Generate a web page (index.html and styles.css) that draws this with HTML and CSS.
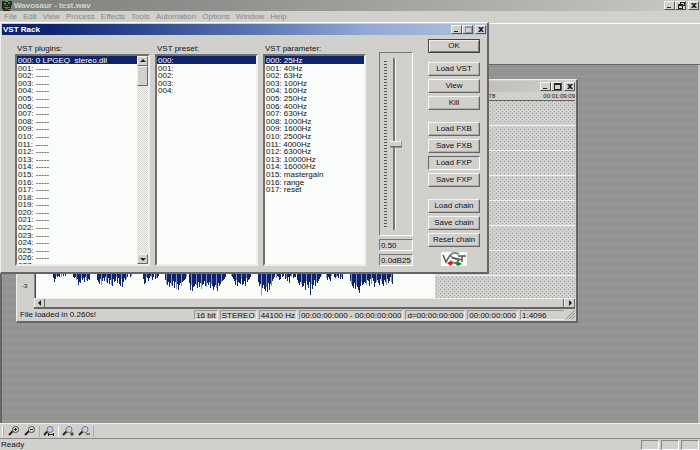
FILE: index.html
```html
<!DOCTYPE html>
<html lang="en">
<head>
<meta charset="utf-8">
<title>Wavosaur - test.wav</title>
<link rel="stylesheet" href="styles.css">
</head>
<body>
<header class="titlebar app-title">
  <svg class="app-icon" viewBox="0 0 10 10" aria-hidden="true"><path fill="#1c2a1c" d="M0 0h3v1h3V0h4v4H9v4H8v2H1V8H0z"/><path fill="#2f9a3c" d="M2 2h2v2H2zM6 1h2v2H6zM2 6h6v1H2zM3 8h1v1H3zM6 8h2v1H6z"/><path fill="#c33" d="M4 4h2v1H4zM4 7h2v1H4z"/></svg>
  <h1 class="title-text">Wavosaur - test.wav</h1>
  <div class="win-buttons">
    <button class="wb" aria-label="Minimize"><svg viewBox="0 0 8 7"><path d="M1 5h4v1H1z"/></svg></button>
    <button class="wb" aria-label="Restore"><svg viewBox="0 0 8 7"><path d="M3 0h5v4H6v3H1V2h2zM4 2v0h1v0zM2 4v2h3V4zM6 3h1V1H4v1h2z" fill-rule="evenodd"/></svg></button>
    <button class="wb wb-close" aria-label="Close"><svg viewBox="0 0 8 7"><path d="M1 1h2l1 1 1-1h2L5 3.500 7 6H5L4 5 3 6H1l2-2.500z"/></svg></button>
  </div>
</header>
<nav class="menubar">
  <a href="#">File</a><a href="#">Edit</a><a href="#">View</a><a href="#">Process</a><a href="#">Effects</a><a href="#">Tools</a><a href="#">Automation</a><a href="#">Options</a><a href="#">Window</a><a href="#">Help</a>
</nav>
<div class="toolbar-area"></div>
<main class="workspace"></main>
<div class="zoombar">
  <i class="grip-bar"></i>
  <button class="tool" aria-label="Zoom in"><svg viewBox="0 0 12 10"><path class="handle" d="M1 9l4-4"/><circle class="lens" cx="7.500" cy="3.500" r="3"/><path class="mark" d="M6 3.500h3M7.500 2v3"/></svg></button>
  <button class="tool" aria-label="Zoom out"><svg viewBox="0 0 12 10"><path class="handle" d="M1 9l4-4"/><circle class="lens" cx="7.500" cy="3.500" r="3"/><path class="mark" d="M6 3.500h3"/></svg></button>
  <i class="sep"></i>
  <button class="tool" aria-label="Zoom selection"><svg viewBox="0 0 12 10"><path class="handle" d="M1 9l4-4"/><circle class="lens blue" cx="7" cy="3.500" r="3"/><path class="mark" d="M5 8.500h6M5.500 7v3M10.500 7v3"/></svg></button>
  <i class="sep light"></i>
  <button class="tool" aria-label="Vertical zoom in"><svg viewBox="0 0 12 10"><path class="handle" d="M1 9l4-4"/><circle class="lens blue" cx="7" cy="3.500" r="3"/><path class="mark" d="M8 8h4M10 6v4"/></svg></button>
  <button class="tool" aria-label="Vertical zoom out"><svg viewBox="0 0 12 10"><path class="handle" d="M1 9l4-4"/><circle class="lens blue" cx="7" cy="3.500" r="3"/><path class="mark" d="M8 8h4"/></svg></button>
  <i class="sep"></i>
</div>
<footer class="statusbar"><span>Ready</span><i class="pane"></i><i class="pane"></i><i class="pane"></i></footer>

<section class="window wave-window" aria-label="Waveform">
  <div class="titlebar wave-title">
    <div class="win-buttons">
      <button class="wb" aria-label="Minimize"><svg viewBox="0 0 8 7"><path d="M1 5h4v1H1z"/></svg></button>
      <button class="wb" aria-label="Maximize"><svg viewBox="0 0 8 7"><path d="M1 0h7v7H1zM2 2v4h5V2z" fill-rule="evenodd"/></svg></button>
      <button class="wb wb-close" aria-label="Close"><svg viewBox="0 0 8 7"><path d="M1 1h2l1 1 1-1h2L5 3.500 7 6H5L4 5 3 6H1l2-2.500z"/></svg></button>
    </div>
  </div>
  <div class="ruler"><span>678</span><span>00:01:09:09</span></div>
  <div class="wave-body">
    <div class="scale"><span>-3</span></div>
    <div class="wave-view"><svg id="wave" class="wave" viewBox="0 0 399 197" preserveAspectRatio="none" aria-hidden="true"></svg></div>
  </div>
  <div class="hscroll">
    <button class="arrow" aria-label="Scroll left"><svg viewBox="0 0 6 6"><path d="M4 0v6L1 3z"/></svg></button>
    <i class="hthumb"></i>
    <button class="arrow" aria-label="Scroll right"><svg viewBox="0 0 6 6"><path d="M2 0v6l3-3z"/></svg></button>
  </div>
  <div class="wave-status">
    <span class="message">File loaded in 0.260s!</span>
    <span class="cell">16 bit</span><span class="cell">STEREO</span><span class="cell">44100 Hz</span><span class="cell">00:00:00:000 - 00:00:00:000</span><span class="cell">d=00:00:00:000</span><span class="cell">00:00:00:000</span><span class="cell last">1:4096</span>
    <svg class="sizegrip" viewBox="0 0 9 9" aria-hidden="true"><path d="M0 9l9-9M3 9l6-6M6 9l3-3"/></svg>
  </div>
</section>

<section class="window dialog" role="dialog" aria-labelledby="rack">
  <div class="titlebar dialog-title">
    <h2 class="title-text" id="rack">VST Rack</h2>
    <div class="win-buttons">
      <button class="wb" aria-label="Minimize"><svg viewBox="0 0 8 7"><path d="M1 5h4v1H1z"/></svg></button>
      <button class="wb off" aria-label="Maximize"><svg viewBox="0 0 8 7"><path d="M1 0h7v7H1zM2 2v4h5V2z" fill-rule="evenodd"/></svg></button>
      <button class="wb wb-close" aria-label="Close"><svg viewBox="0 0 8 7"><path d="M1 1h2l1 1 1-1h2L5 3.500 7 6H5L4 5 3 6H1l2-2.500z"/></svg></button>
    </div>
  </div>
  <div class="rack">
    <div class="field plugins">
      <label for="plugins">VST plugins:</label>
      <div class="listbox">
        <select id="plugins" size="5">
          <option selected>000: 0 LPGEQ_stereo.dll</option><option>001: -----</option><option>002: -----</option><option>003: -----</option><option>004: -----</option><option>005: -----</option><option>006: -----</option><option>007: -----</option><option>008: -----</option><option>009: -----</option><option>010: -----</option><option>011: -----</option><option>012: -----</option><option>013: -----</option><option>014: -----</option><option>015: -----</option><option>016: -----</option><option>017: -----</option><option>018: -----</option><option>019: -----</option><option>020: -----</option><option>021: -----</option><option>022: -----</option><option>023: -----</option><option>024: -----</option><option>025: -----</option><option>026: -----</option><option>027: -----</option>
        </select>
        <div class="vscroll">
          <button class="arrow" aria-label="Scroll up"><svg viewBox="0 0 6 6"><path d="M0 4h6L3 1z"/></svg></button>
          <i class="vthumb"></i>
          <button class="arrow down" aria-label="Scroll down"><svg viewBox="0 0 6 6"><path d="M0 2h6L3 5z"/></svg></button>
        </div>
      </div>
    </div>
    <div class="field">
      <label for="preset">VST preset:</label>
      <div class="listbox">
        <select id="preset" size="5"><option selected>000:</option><option>001:</option><option>002:</option><option>003:</option><option>004:</option></select>
      </div>
    </div>
    <div class="field">
      <label for="param">VST parameter:</label>
      <div class="listbox">
        <select id="param" size="5"><option selected>000: 25Hz</option><option>001: 40Hz</option><option>002: 63Hz</option><option>003: 100Hz</option><option>004: 160Hz</option><option>005: 250Hz</option><option>006: 400Hz</option><option>007: 630Hz</option><option>008: 1000Hz</option><option>009: 1600Hz</option><option>010: 2500Hz</option><option>011: 4000Hz</option><option>012: 6300Hz</option><option>013: 10000Hz</option><option>014: 16000Hz</option><option>015: mastergain</option><option>016: range</option><option>017: reset</option></select>
      </div>
    </div>
    <div class="fader">
      <div class="fader-box"><i class="ticks"></i><input type="range" min="0" max="100" value="50" aria-label="Parameter value"></div>
      <input class="value" type="text" value="0.50" aria-label="Value">
      <input class="value" type="text" value="0.0dB25" aria-label="Display">
    </div>
    <div class="actions">
      <div class="group"><button class="btn default">OK</button></div>
      <div class="group"><button class="btn">Load VST</button><button class="btn">View</button><button class="btn">Kill</button></div>
      <div class="group"><button class="btn">Load FXB</button><button class="btn">Save FXB</button><button class="btn pressed">Load FXP</button><button class="btn">Save FXP</button></div>
      <div class="group"><button class="btn">Load chain</button><button class="btn">Save chain</button><button class="btn">Reset chain</button></div>
      <svg class="vst-logo" viewBox="0 0 26 14" role="img" aria-label="VST"><path fill="#fafcfa" d="M0 0h26v14H0z"/><path fill="none" stroke="#555" stroke-width="1.500" d="M2 3l3 7 4-7M17 4h8M21 4v6"/><path fill="none" stroke="#888" stroke-width="2" d="M18 2c-4-2-9-1-8 2s8 2 7 5-6 2-8 0"/><path fill="none" stroke="#444" d="M11 6l8 1M16 9l5-2"/><path fill="#e01818" d="M6 11l4-2 2 2-2 3z"/><path fill="#128a20" d="M13 11l5-1 3 2-4 2z"/></svg>
    </div>
  </div>
</section>
<script src="wave.js"></script>
</body>
</html>
```
FILE: styles.css
```css
:root {
  --face: #d2d0cc;
  --paper: #fafcfa;
  --navy: #10246c;
  --desk: #929492;
}
* { box-sizing: border-box; }
body {
  margin: 0;
  height: 100vh;
  display: flex;
  flex-direction: column;
  position: relative;
  overflow: hidden;
  background: var(--face);
  color: #111;
  font: 8px/10px "Liberation Sans", Arial, sans-serif;
}
button, input, select { font: inherit; color: inherit; margin: 0; border-radius: 0; }
h1, h2 { margin: 0; }
i { display: block; }

.titlebar { display: flex; align-items: center; }
.title-text { font-size: 8px; line-height: 10px; font-weight: bold; flex: 1; }
.app-title {
  height: 11px;
  padding: 0 1px 0 2px;
  gap: 2px;
  background: linear-gradient(90deg, #7d817a, #8e908e 30%, #aaaaa8 65%, #cbc9c6);
  color: #d6d4d0;
}
.app-icon { width: 10px; height: 10px; }
.win-buttons { display: flex; margin-left: auto; }
.wb {
  width: 11px;
  height: 9px;
  padding: 0;
  display: grid;
  place-items: center;
  background: var(--face);
  border: 1px solid;
  border-color: #f4f4f2 #555 #555 #f4f4f2;
}
.wb svg { width: 8px; height: 7px; fill: #222; }
.wb.off svg { fill: #999; }
.wb-close { margin-left: 2px; }

.menubar { display: flex; gap: 6px; height: 12px; padding: 0 4px; line-height: 11px; }
.menubar a { color: #868684; text-decoration: none; }
.toolbar-area {
  height: 42px;
  border-top: 1px solid var(--paper);
  border-bottom: 1px solid #666;
}
.workspace {
  flex: 1;
  border-left: 2px solid #666;
  border-right: 2px solid #c4c4c2;
  background: conic-gradient(at 1px 1px, #0000 75%, #b2b4b2 0) 0 3px / 4px 8px var(--desk);
}
.zoombar {
  display: flex;
  align-items: center;
  height: 15px;
  padding: 0 2px;
  border-top: 1px solid #eee;
}
.grip-bar { width: 2px; height: 11px; margin-right: 2px; border-left: 1px solid #fff; border-right: 1px solid #aaa; }
.tool { width: 16px; height: 12px; padding: 0; border: 0; background: none; display: grid; place-items: center; }
.tool svg { width: 12px; height: 10px; fill: none; stroke: #222; }
.handle { stroke-width: 2; }
.lens { fill: #ddd; stroke: #444; }
.lens.blue { fill: #c3cdf0; stroke: #777; }
.sep { width: 1px; height: 11px; margin: 0 1px; background: #aaa; }
.sep.light { background: #fff; }
.statusbar {
  display: flex;
  gap: 2px;
  height: 12px;
  padding: 1px 1px 0;
  border-top: 1px solid #888;
}
.statusbar span { flex: 1; }
.pane { width: 18px; height: 10px; border: 1px solid; border-color: #888 #fff #fff #888; }

.window { position: absolute; background: var(--face); }
.wave-window {
  left: 16px;
  top: 79px;
  width: 562px;
  border: 1px solid;
  border-color: #eee #666 #666 #eee;
  border-right-width: 2px;
  border-bottom-width: 2px;
  padding: 1px;
}
.wave-title { height: 11px; background: linear-gradient(90deg, #888, #bdbbb8 80%, #d0cecb); }
.ruler {
  display: flex;
  justify-content: flex-end;
  gap: 48px;
  height: 9px;
  font-size: 6px;
  line-height: 9px;
  border-bottom: 1px solid #666;
}
.wave-body { display: flex; height: 197px; }
.scale { width: 17px; padding: 180px 4px 0; font-size: 6px; border-right: 1px solid #888; }
.wave-view {
  flex: 1;
  border-left: 1px solid #2b3fae;
  background:
    repeating-linear-gradient(#0000 0 24px, #f2f2f0 24px 25px),
    conic-gradient(at 1px 1px, #0000 75%, #7c9de0 0) 0 0 / 4px 4px,
    conic-gradient(at 1px 1px, #0000 75%, #a8aaac 0) 2px 2px / 4px 4px,
    #d0d0ce;
}
.wave { display: block; width: 399px; height: 197px; background: var(--paper); }
.hscroll { display: flex; height: 11px; margin-left: 16px; border-top: 1px solid #eee; border-bottom: 2px solid #666; }
.arrow {
  flex: none;
  width: 11px;
  padding: 0;
  display: grid;
  place-items: center;
  background: var(--face);
  border: 1px solid;
  border-color: #f4f4f2 #666 #666 #f4f4f2;
}
.arrow svg { width: 6px; height: 6px; fill: #222; }
.hscroll .arrow { border-width: 0 1px; }
.hthumb { flex: 1; border-right: 1px solid #666; }
.wave-status { display: flex; gap: 2px; padding-top: 1px; padding-left: 2px; height: 11px; }
.message { flex: 1; }
.cell { height: 10px; padding: 0 1px; border: 1px solid; border-color: #999 #eee #eee #999; line-height: 9px; white-space: nowrap; }
.cell.last { width: 44px; border-right: 0; }
.sizegrip { width: 9px; height: 9px; stroke: #888; }

.dialog {
  left: 0;
  top: 22px;
  width: 489px;
  padding: 1px 0 0 1px;
  border: 1px solid;
  border-color: #fff #666 #666 #eee;
  border-right-width: 2px;
  border-bottom-width: 2px;
}
.dialog-title {
  height: 11px;
  padding: 0 1px;
  color: #fff;
  background: linear-gradient(90deg, var(--navy) 10%, #2c468c 28%, #5870ac 50%, #90a8d4 75%, #b4c4dc);
}
.rack { display: flex; padding: 4px 7px 6px 13px; }
.field { display: flex; flex-direction: column; width: 103px; margin-right: 5px; }
.field.plugins { width: 135px; }
.field label { margin: 5px 2px 0; }
.listbox {
  flex: 1;
  min-height: 0;
  display: flex;
  background: var(--paper);
  border: 2px solid;
  border-color: #707070 #eee #eee #707070;
}
.listbox select {
  flex: 1;
  min-width: 0;
  height: 208px;
  padding: 0;
  border: 0;
  outline: 0;
  background: none;
  overflow: hidden;
  scrollbar-width: none;
}
.listbox option { height: 0.95em; min-height: 0; padding: 0 1px; overflow: visible; }
.listbox option:checked { color: #fff; background: linear-gradient(var(--navy), var(--navy)); }
.vscroll {
  display: flex;
  flex-direction: column;
  width: 11px;
  background: repeating-conic-gradient(#d6d5d2 0 25%, #f4f4f2 0 50%) 0 0 / 2px 2px;
}
.vscroll .arrow { height: 10px; }
.vthumb { height: 20px; background: var(--face); border: 1px solid; border-color: #f4f4f2 #666 #666 #f4f4f2; }
.arrow.down { margin-top: auto; }

.fader { display: flex; flex-direction: column; width: 34px; margin: 13px 15px 0 8px; }
.fader-box {
  flex: 1;
  min-height: 0;
  display: flex;
  padding: 5px 4px;
  border: 1px solid;
  border-color: #777 #fff #fff #777;
}
.ticks { width: 3px; margin: 3px 0; background: repeating-linear-gradient(#555 0 1px, #0000 1px 3px); }
.fader-box input {
  appearance: none;
  writing-mode: vertical-lr;
  direction: rtl;
  width: 15px;
  height: 172px;
  background: linear-gradient(90deg, #0000 6px, #777 6px 8px, #f4f4f2 8px 9px, #0000 9px);
}
.fader-box input::-webkit-slider-thumb {
  appearance: none;
  width: 14px;
  height: 7px;
  background:
    linear-gradient(270deg, #666 1px, #0000 1px),
    linear-gradient(#f4f4f2 1px, var(--face) 1px 5px, #666 5px);
  clip-path: polygon(0 50%, 25% 0, 100% 0, 100% 100%, 25% 100%);
}
.value {
  width: 100%;
  height: 12px;
  margin-top: 3px;
  padding: 0 1px;
  line-height: 10px;
  background: var(--face);
  border: 1px solid;
  border-color: #777 #fff #fff #777;
}
.actions { display: flex; flex-direction: column; align-items: center; width: 52px; }
.group { display: flex; flex-direction: column; gap: 3px; width: 100%; margin-bottom: 12px; }
.group:first-child { margin-bottom: 9px; }
.group:last-of-type { margin-bottom: 5px; }
.btn {
  height: 14px;
  padding: 0;
  line-height: 10px;
  background: var(--face);
  border: 1px solid;
  border-color: #f4f4f2 #666 #666 #f4f4f2;
  box-shadow: inset -1px -1px #b0aeaa;
}
.btn.default { border-color: #444; box-shadow: inset 1px 1px #eee, inset -1px -1px #777; }
.btn.pressed { border-color: #666 #fff #fff #666; box-shadow: none; }
.vst-logo { width: 26px; height: 14px; }
```
FILE: wave.js
```js
// Lower peaks of the clip, one base-36 digit per pixel column.
const peaks =
  "37412120201010" + "000000" + "23254a78353725645" + "0000000" +
  "5794a636278395ab4762839b4c735420" + "02100000000000" +
  "4982363125204331" + "000000" + "59a7c8ab6d7e9fa8b76" + "54200" +
  "8fagcb9ad7c8ea96bc8a7d9bfcadg8b976542" + "0000012" +
  "46a5b7894a96b37542" + "0000000" + "7b9kdaegch8f9b64" +
  "20312540210436281203220" + "58a79cb8f6ad7k9ea5b78642" +
  "10000352461002321304240000000" + "69bd8eacfib7a9" +
  "78a56b4936c8758a469b57a486279";
const start = 17;
const base = 174;
const bars = { dark: "", light: "" };
[...peaks].forEach((digit, i) => {
  const depth = parseInt(digit, 36);
  if (!depth) return;
  bars[i % 5 === 3 ? "light" : "dark"] += `M${start + i} 99h1V${base + depth}h-1z`;
});
document.getElementById("wave").innerHTML =
  `<path fill="#10246c" d="${bars.dark}"/><path fill="#8090c4" d="${bars.light}"/>`;
```
